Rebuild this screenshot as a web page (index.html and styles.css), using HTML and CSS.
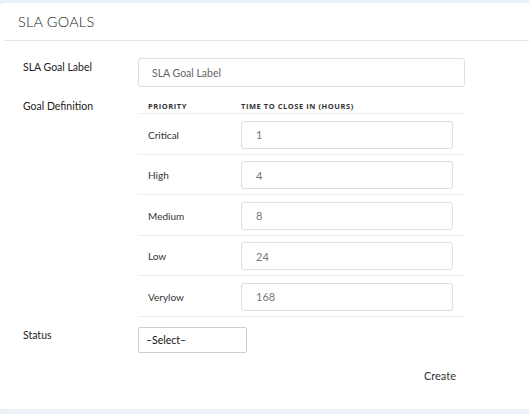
FILE: index.html
```html
<!DOCTYPE html>
<html lang="en">
<head>
<meta charset="utf-8">
<title>SLA Goals</title>
<link rel="stylesheet" href="styles.css">
</head>
<body>
<div class="card">
  <div class="card-header">
    <h2 class="card-title">SLA GOALS</h2>
  </div>
  <div class="card-body">
    <div class="form-row">
      <label class="form-label">SLA Goal Label</label>
      <div class="form-field">
        <input class="text-input" type="text" placeholder="SLA Goal Label">
      </div>
    </div>
    <div class="form-row form-row-table">
      <label class="form-label label-def">Goal Definition</label>
      <div class="form-field">
        <table class="goal-table">
          <thead>
            <tr><th class="col-priority">PRIORITY</th><th class="col-time">TIME TO CLOSE IN (HOURS)</th></tr>
          </thead>
          <tbody>
            <tr><td class="col-priority">Critical</td><td class="col-time"><input class="num-input" type="text" value="1"></td></tr>
            <tr><td class="col-priority">High</td><td class="col-time"><input class="num-input" type="text" value="4"></td></tr>
            <tr><td class="col-priority">Medium</td><td class="col-time"><input class="num-input" type="text" value="8"></td></tr>
            <tr><td class="col-priority">Low</td><td class="col-time"><input class="num-input" type="text" value="24"></td></tr>
            <tr><td class="col-priority">Verylow</td><td class="col-time"><input class="num-input" type="text" value="168"></td></tr>
          </tbody>
        </table>
      </div>
    </div>
    <div class="form-row form-row-status">
      <label class="form-label label-status">Status</label>
      <div class="form-field">
        <div class="select-box">–Select–</div>
      </div>
    </div>
    <div class="actions">
      <button class="btn-create" type="button">Create</button>
    </div>
  </div>
</div>
</body>
</html>
```

FILE: styles.css
```css
html, body {
  margin: 0;
  padding: 0;
}
body {
  background: #edf2f9;
  font-family: "Lato", "Open Sans", sans-serif;
  color: #222;
  overflow: hidden;
}
.card {
  background: #fff;
  margin: 3px 0 0 0;
  height: 406px;
  border-radius: 4px 0 0 4px;
}
.card-header {
  margin-left: 4px;
  height: 37px;
  border-bottom: 1px solid #e2e4e7;
  display: flex;
  align-items: center;
  padding-left: 14px;
}
.card-title {
  margin: 0;
  font-size: 14.5px;
  font-weight: 300;
  color: #222;
  letter-spacing: 0.2px;
}
.card-body {
  padding: 17px 0 0 23px;
  width: 442px;
}
.form-row {
  display: flex;
}
.form-label {
  width: 115px;
  flex: none;
  font-size: 10.5px;
  color: #222;
  padding-top: 2px;
  line-height: 14px;
}
.form-field {
  flex: 1;
}
.text-input {
  box-sizing: border-box;
  width: 327px;
  height: 29px;
  border: 1px solid #dcdfe3;
  border-radius: 3px;
  padding: 0 13px;
  font-family: inherit;
  font-size: 10.5px;
  color: #555;
  outline: none;
}
.text-input::placeholder {
  color: #666;
}
.form-row-table {
  margin-top: 12px;
}
.label-def {
  padding-top: 0;
}
.goal-table {
  width: 327px;
  border-collapse: collapse;
}
.goal-table th {
  font-family: "Open Sans", sans-serif;
  font-size: 7.5px;
  font-weight: 700;
  letter-spacing: 0.55px;
  color: #333;
  text-align: left;
  height: 14px;
  padding: 0;
  line-height: 14px;
  vertical-align: middle;
  border-bottom: 1px solid #e9eef3;
}
.goal-table td {
  border-bottom: 1px solid #e9eef3;
  padding: 6.5px 0 5px 0;
  font-size: 10px;
  color: #333;
  vertical-align: middle;
}
.goal-table .col-priority {
  width: 93px;
  padding-left: 10px;
}
.goal-table .col-time {
  padding-right: 12px;
}
.num-input {
  box-sizing: border-box;
  display: block;
  width: 212px;
  height: 28px;
  border: 1px solid #dcdfe3;
  border-radius: 3px;
  padding: 0 14px;
  font-family: inherit;
  font-size: 11px;
  color: #777;
  outline: none;
}
.form-row-status {
  margin-top: 10px;
}
.label-status {
  padding-top: 1px;
}
.select-box {
  box-sizing: border-box;
  width: 109px;
  height: 26px;
  border: 1px solid #c9ccd1;
  border-radius: 2px;
  padding: 0 7px;
  font-size: 10.5px;
  color: #111;
  display: flex;
  align-items: center;
}
.actions {
  display: flex;
  justify-content: flex-end;
  margin-top: 16px;
  padding-right: 9px;
}
.btn-create {
  background: none;
  border: none;
  padding: 0;
  font-family: inherit;
  font-size: 11px;
  color: #333;
  cursor: pointer;
}
```
